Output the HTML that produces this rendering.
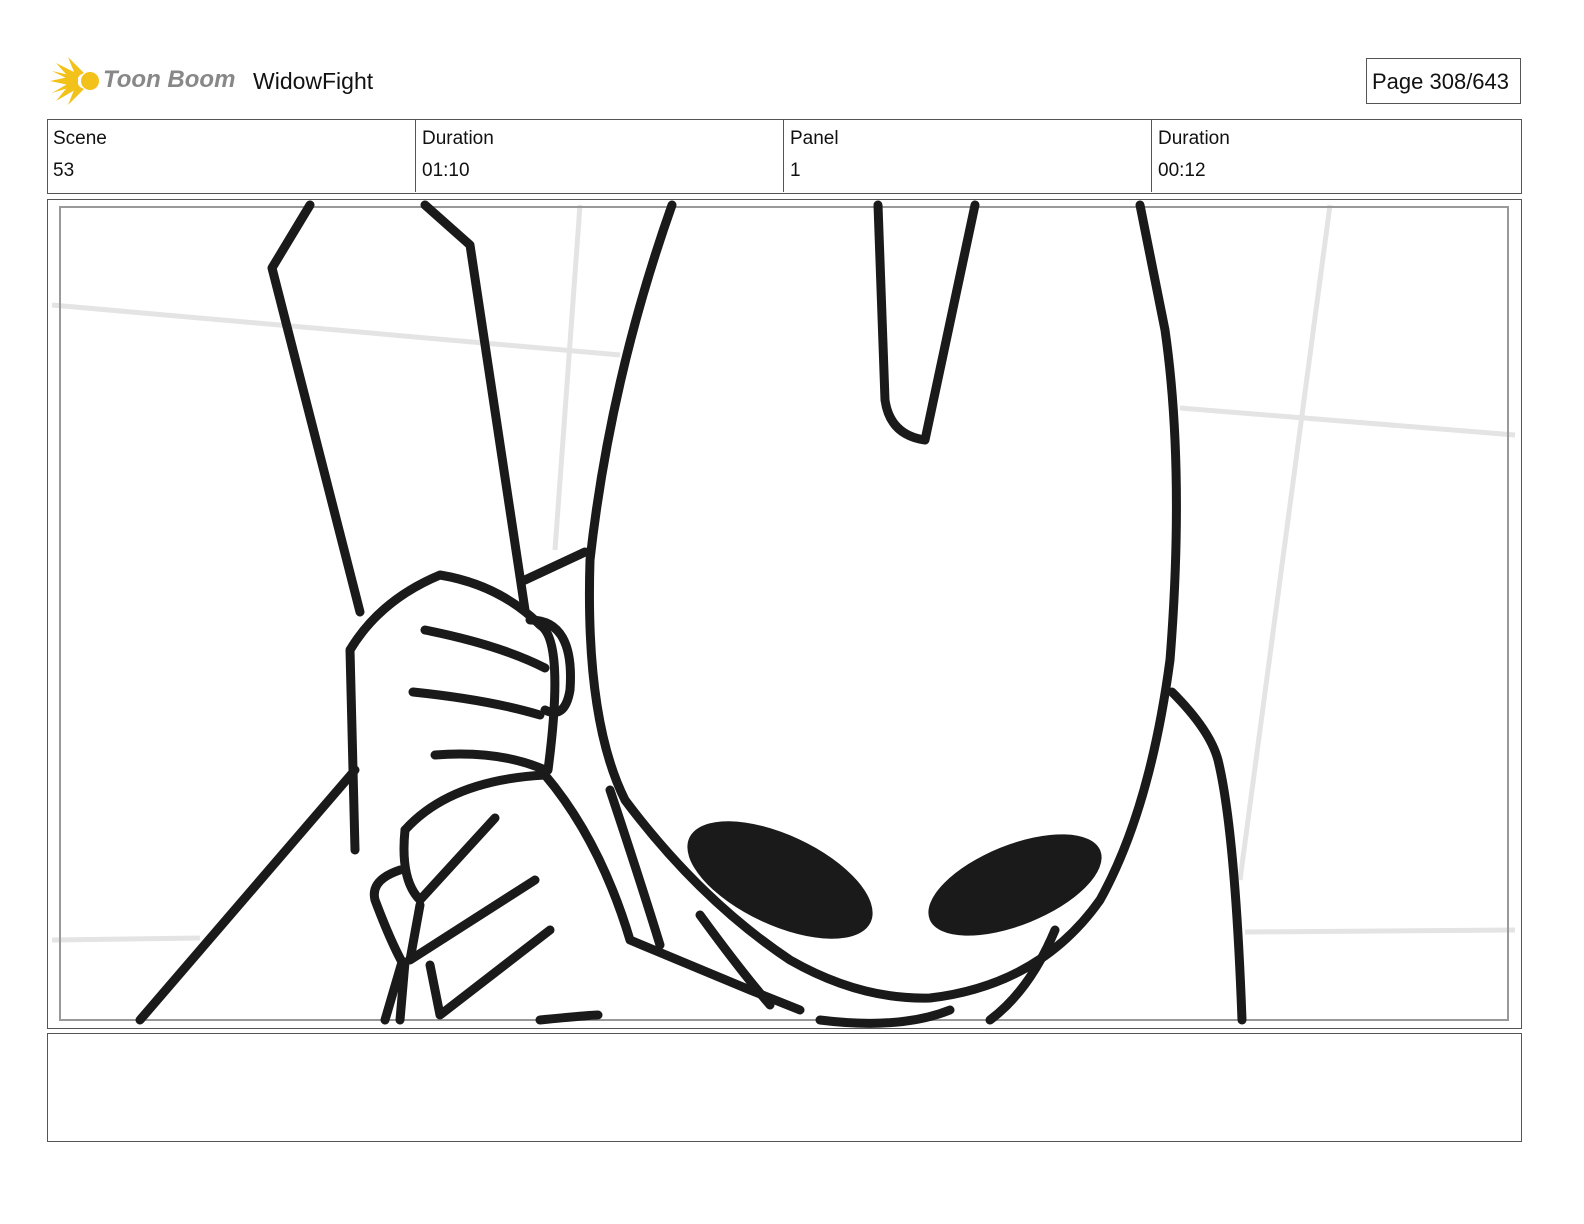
<!DOCTYPE html>
<html><head><meta charset="utf-8"><style>
body{margin:0;width:1584px;height:1224px;background:#fff;position:relative;font-family:"Liberation Sans",sans-serif;overflow:hidden}
.t{position:absolute;font-size:19px;color:#111}
.box{position:absolute;border:1px solid #555}
</style></head><body>
<svg style="position:absolute;left:48px;top:55px" width="60" height="52" viewBox="0 0 60 52">
<g fill="#f3c21a"><path d="M2 26 L30 20 L30 32Z"/><path d="M8 8 L32 20 L26 28Z"/><path d="M8 46 L32 32 L26 24Z"/><path d="M20 2 L36 18 L28 22Z"/><path d="M20 50 L36 34 L28 30Z"/><path d="M4 16 L30 22 L28 28Z"/><path d="M4 38 L30 30 L28 24Z"/><circle cx="42" cy="26" r="9"/></g>
</svg>
<div class="t" style="left:103px;top:66px;font-size:24px;font-style:italic;font-weight:bold;color:#888">Toon Boom</div>
<div class="t" style="left:253px;top:68px;font-size:23px">WidowFight</div>
<div class="box" style="left:1366px;top:58px;width:153px;height:44px"></div>
<div class="t" style="left:1372px;top:69px;font-size:22px">Page 308/643</div>
<div class="box" style="left:47px;top:119px;width:1473px;height:73px"></div>
<div class="box" style="left:415px;top:119px;width:0;height:73px;border-width:0 0 0 1px"></div>
<div class="box" style="left:783px;top:119px;width:0;height:73px;border-width:0 0 0 1px"></div>
<div class="box" style="left:1151px;top:119px;width:0;height:73px;border-width:0 0 0 1px"></div>
<div class="t" style="left:53px;top:128px">Scene</div><div class="t" style="left:53px;top:160px">53</div>
<div class="t" style="left:422px;top:128px">Duration</div><div class="t" style="left:422px;top:160px">01:10</div>
<div class="t" style="left:790px;top:128px">Panel</div><div class="t" style="left:790px;top:160px">1</div>
<div class="t" style="left:1158px;top:128px">Duration</div><div class="t" style="left:1158px;top:160px">00:12</div>
<div class="box" style="left:47px;top:199px;width:1473px;height:828px"></div>
<div class="box" style="left:47px;top:1033px;width:1473px;height:107px"></div>
<svg style="position:absolute;left:0;top:0" width="1584" height="1224">
<g stroke="#e4e4e4" stroke-width="5" fill="none">
<path d="M52 305 L620 355"/><path d="M1180 408 L1515 435"/><path d="M52 940 L200 938"/><path d="M1245 932 L1515 930"/><path d="M580 205 L555 550"/><path d="M1330 205 L1240 880"/></g>
<rect x="60" y="207" width="1448" height="813" fill="none" stroke="#999" stroke-width="2"/>
<g stroke="#1a1a1a" stroke-width="9" fill="none" stroke-linecap="round" stroke-linejoin="round">
<path d="M310 205 L272 268 L360 612"/>
<path d="M425 205 L470 245 L525 610"/>
<path d="M672 205 Q610 380 590 560 Q585 720 625 800 Q700 900 790 960 Q860 1000 930 998 Q1040 985 1100 900 Q1150 810 1170 660 Q1185 470 1165 330 L1140 205"/>
<path d="M878 205 L885 400 Q890 435 925 440 L975 205"/>
<path d="M1172 692 Q1210 730 1218 760 Q1235 830 1242 1020"/>
<path d="M140 1020 L355 770"/>
<path d="M355 850 L350 650 Q380 600 440 575 Q500 585 540 625 Q565 640 548 770"/>
<path d="M585 552 L525 580"/>
<path d="M530 620 Q575 620 570 690 Q565 720 545 710"/>
<path d="M425 630 Q500 645 545 668"/><path d="M413 692 Q490 700 540 715"/><path d="M435 755 Q500 750 545 770"/>
<path d="M405 830 Q450 780 545 775 Q600 840 630 940 L750 990 L800 1010"/>
<path d="M400 870 Q370 880 375 900 Q390 940 402 962 L385 1020"/>
<path d="M405 830 Q400 880 420 900 L495 818"/>
<path d="M420 905 L410 960 L535 880"/><path d="M430 965 L440 1015 L550 930"/><path d="M405 962 L400 1020"/>
<path d="M540 1020 Q590 1015 598 1015"/>
<path d="M610 790 Q640 880 660 945"/>
<path d="M700 915 Q740 970 770 1005"/>
<path d="M1055 930 Q1030 990 990 1020"/>
<path d="M820 1020 Q900 1030 950 1010"/>
</g>
<g fill="#1a1a1a">
<ellipse cx="780" cy="880" rx="100" ry="45" transform="rotate(25 780 880)"/>
<ellipse cx="1015" cy="885" rx="92" ry="40" transform="rotate(-22 1015 885)"/>
</g>
</svg>
</body></html>
